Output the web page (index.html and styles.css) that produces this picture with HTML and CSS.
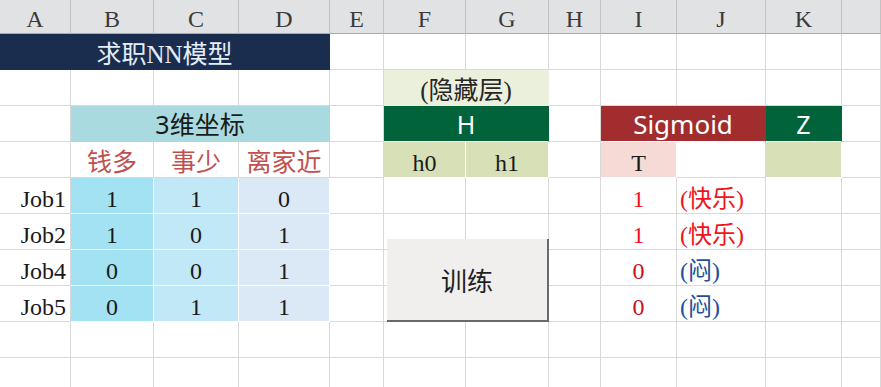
FILE: index.html
```html
<!DOCTYPE html>
<html>
<head>
    <meta charset="utf-8">
    <title>求职NN模型</title>
    <link rel="stylesheet" href="styles.css">
</head>
<body>
    <div class="sheet">
        <div class="grid">
            <!-- 列标题 -->
            <div class="head">A</div>
            <div class="head">B</div>
            <div class="head">C</div>
            <div class="head">D</div>
            <div class="head">E</div>
            <div class="head">F</div>
            <div class="head">G</div>
            <div class="head">H</div>
            <div class="head">I</div>
            <div class="head">J</div>
            <div class="head">K</div>
            <div class="head"></div>

            <!-- 第1行 -->
            <div class="cell title span4">求职NN模型</div>
            <div class="cell"></div>
            <div class="cell"></div>
            <div class="cell"></div>
            <div class="cell"></div>
            <div class="cell"></div>
            <div class="cell"></div>
            <div class="cell"></div>
            <div class="cell"></div>

            <!-- 第2行 -->
            <div class="cell"></div>
            <div class="cell"></div>
            <div class="cell"></div>
            <div class="cell"></div>
            <div class="cell"></div>
            <div class="cell hidden-layer span2">(隐藏层)</div>
            <div class="cell"></div>
            <div class="cell"></div>
            <div class="cell"></div>
            <div class="cell"></div>
            <div class="cell"></div>

            <!-- 第3行 -->
            <div class="cell"></div>
            <div class="cell sans coord span3">3维坐标</div>
            <div class="cell"></div>
            <div class="cell sans green span2">H</div>
            <div class="cell"></div>
            <div class="cell sans sigmoid span2">Sigmoid</div>
            <div class="cell sans green">Z</div>
            <div class="cell"></div>

            <!-- 第4行 -->
            <div class="cell"></div>
            <div class="cell feature">钱多</div>
            <div class="cell feature">事少</div>
            <div class="cell feature">离家近</div>
            <div class="cell"></div>
            <div class="cell light-green">h0</div>
            <div class="cell light-green">h1</div>
            <div class="cell"></div>
            <div class="cell pink">T</div>
            <div class="cell"></div>
            <div class="cell light-green"></div>
            <div class="cell"></div>

            <!-- 第5行 -->
            <div class="cell job">Job1</div>
            <div class="cell col-b">1</div>
            <div class="cell col-c">1</div>
            <div class="cell col-d">0</div>
            <div class="cell"></div>
            <div class="cell"></div>
            <div class="cell"></div>
            <div class="cell"></div>
            <div class="cell happy">1</div>
            <div class="cell mood happy">(快乐)</div>
            <div class="cell"></div>
            <div class="cell"></div>

            <!-- 第6行 -->
            <div class="cell job">Job2</div>
            <div class="cell col-b">1</div>
            <div class="cell col-c">0</div>
            <div class="cell col-d">1</div>
            <div class="cell"></div>
            <div class="cell"></div>
            <div class="cell"></div>
            <div class="cell"></div>
            <div class="cell happy">1</div>
            <div class="cell mood happy">(快乐)</div>
            <div class="cell"></div>
            <div class="cell"></div>

            <!-- 第7行 -->
            <div class="cell job">Job4</div>
            <div class="cell col-b">0</div>
            <div class="cell col-c">0</div>
            <div class="cell col-d">1</div>
            <div class="cell"></div>
            <div class="cell"></div>
            <div class="cell"></div>
            <div class="cell"></div>
            <div class="cell zero">0</div>
            <div class="cell mood sad">(闷)</div>
            <div class="cell"></div>
            <div class="cell"></div>

            <!-- 第8行 -->
            <div class="cell job">Job5</div>
            <div class="cell col-b">0</div>
            <div class="cell col-c">1</div>
            <div class="cell col-d">1</div>
            <div class="cell"></div>
            <div class="cell"></div>
            <div class="cell"></div>
            <div class="cell"></div>
            <div class="cell zero">0</div>
            <div class="cell mood sad">(闷)</div>
            <div class="cell"></div>
            <div class="cell"></div>

            <!-- 第9、10行 -->
            <div class="cell"></div><div class="cell"></div><div class="cell"></div><div class="cell"></div>
            <div class="cell"></div><div class="cell"></div><div class="cell"></div><div class="cell"></div>
            <div class="cell"></div><div class="cell"></div><div class="cell"></div><div class="cell"></div>
            <div class="cell"></div><div class="cell"></div><div class="cell"></div><div class="cell"></div>
            <div class="cell"></div><div class="cell"></div><div class="cell"></div><div class="cell"></div>
            <div class="cell"></div><div class="cell"></div><div class="cell"></div><div class="cell"></div>
        </div>

        <button class="train-btn" type="button">训练</button>
    </div>
</body>
</html>
```

FILE: styles.css
```css
*{
    padding: 0;
    margin: 0;
    box-sizing: border-box;
}

body
{
    background-color: #ffffff;
    overflow: hidden;
}

.sheet
{
    position: relative;
    width: 881px;
    height: 387px;
    overflow: hidden;
}

.grid
{
    display: grid;
    grid-template-columns: 71px 83px 85px 91px 54px 82px 83px 52px 76px 89px 76px 1fr;
    grid-template-rows: 34px repeat(10, 36px);
    font-family: "Liberation Serif", "Noto Sans CJK SC", serif;
    font-size: 24px;
    color: #1a1a1a;
}

.head
{
    display: flex;
    align-items: flex-end;
    justify-content: center;
    line-height: 28px;
    background-color: #e1e2e4;
    color: #3a3a3a;
    border-right: 1px solid #c2c2c2;
    border-bottom: 1px solid #a9a9a9;
}

.cell
{
    display: flex;
    align-items: flex-end;
    justify-content: center;
    line-height: 28px;
    white-space: nowrap;
    border-right: 1px solid #d9d9d9;
    border-bottom: 1px solid #d9d9d9;
}

.span2 { grid-column: span 2; }
.span3 { grid-column: span 3; }
.span4 { grid-column: span 4; }

/* 无衬线标题单元格 */
.sans
{
    align-items: center;
    font-family: "Noto Sans", "Noto Sans CJK SC", sans-serif;
    font-size: 25px;
}

.title
{
    background-color: #1b2d4f;
    border-color: #1b2d4f;
    color: #e4eef8;
    font-size: 25px;
}

.hidden-layer
{
    background-color: #ebf0dc;
    border-color: #ebf0dc;
    color: #262626;
    font-size: 25px;
}

.coord
{
    background-color: #a9dae0;
    border-color: #a9dae0;
}

.green
{
    background-color: #00633a;
    border-color: #00633a #00633a #ffffff #00633a;
    color: #ffffff;
}

.sigmoid
{
    background-color: #a12d2e;
    border-color: #a12d2e #a12d2e #ffffff #a12d2e;
    color: #ffffff;
    font-size: 26px;
}

.feature
{
    color: #c0504d;
    font-size: 25px;
}

.light-green
{
    background-color: #d7e0b6;
    border-color: #ffffff;
}

.pink
{
    background-color: #f6dad6;
    border-color: #ffffff;
}

.job
{
    justify-content: flex-end;
    padding-right: 4px;
}

.col-b
{
    background-color: #a3e2f2;
    border-color: #ffffff;
}

.col-c
{
    background-color: #c0e8f7;
    border-color: #ffffff;
}

.col-d
{
    background-color: #dbe8f5;
    border-color: #ffffff;
}

.happy
{
    color: #f0141c;
}

.zero
{
    color: #c8101e;
}

.sad
{
    color: #1f4e9c;
}

.mood
{
    justify-content: flex-start;
    padding-left: 3px;
}

.train-btn
{
    position: absolute;
    left: 387px;
    top: 239px;
    width: 162px;
    height: 83px;
    background-color: #f0efed;
    border: none;
    border-right: 2px solid #6a6a6a;
    border-bottom: 2px solid #6a6a6a;
    font-family: "Noto Sans", "Noto Sans CJK SC", sans-serif;
    font-size: 26px;
    color: #1f1f1f;
    cursor: pointer;
}
```
